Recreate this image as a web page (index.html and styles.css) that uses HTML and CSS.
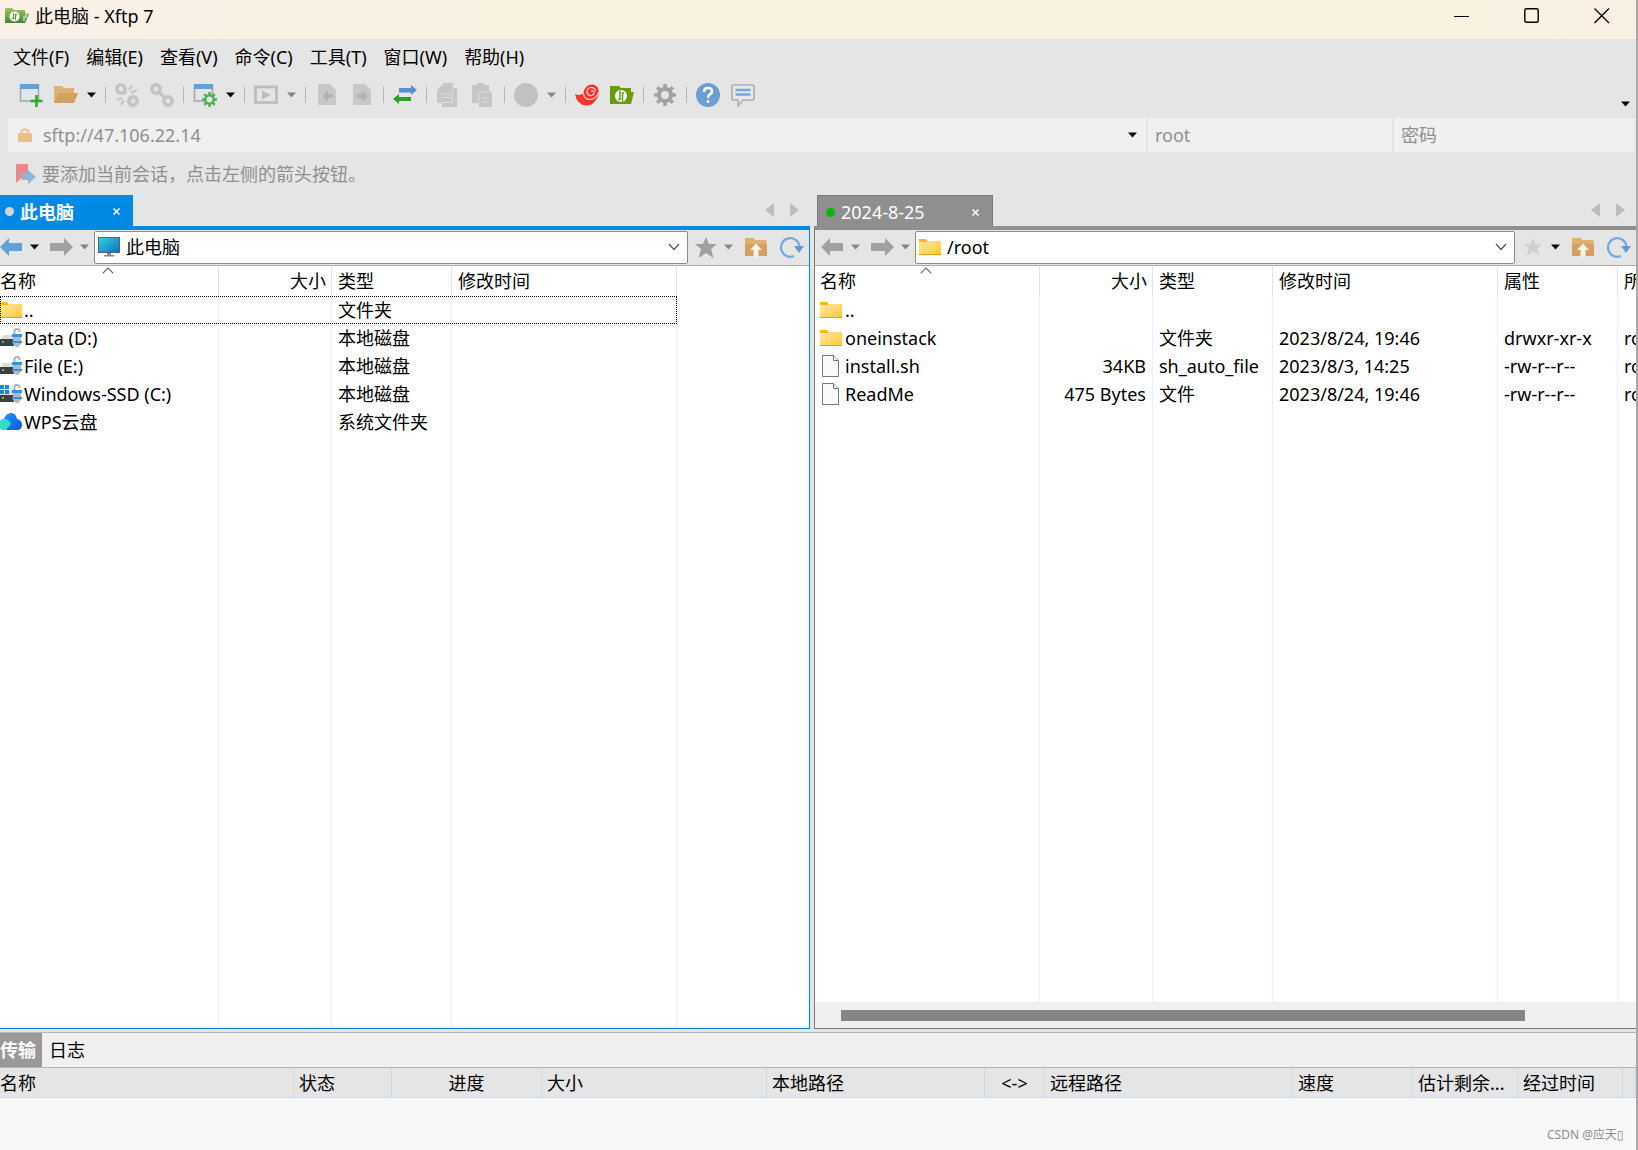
FILE: index.html
```
<!DOCTYPE html>
<html lang="zh-CN">
<head>
<meta charset="utf-8">
<title>此电脑 - Xftp 7</title>
<link rel="stylesheet" href="styles.css">
</head>
<body>
<svg class="defs" aria-hidden="true">
  <defs>
    <linearGradient id="g-folder" x1="0" y1="0" x2="1" y2="1"><stop offset="0" stop-color="#ffe9a2"/><stop offset="1" stop-color="#ffc83d"/></linearGradient>
    <linearGradient id="g-screen" x1="0" y1="0" x2="1" y2="1"><stop offset="0" stop-color="#34d3e0"/><stop offset="1" stop-color="#0f6fc0"/></linearGradient>
    <linearGradient id="g-cloud" x1="0" y1="0" x2="1" y2="1"><stop offset="0" stop-color="#1aa0ff"/><stop offset="1" stop-color="#0b55d8"/></linearGradient>
    <linearGradient id="g-app" x1="0" y1="0" x2="0" y2="1"><stop offset="0" stop-color="#a3c45c"/><stop offset="1" stop-color="#3f8a35"/></linearGradient>
  </defs>
  <symbol id="caret" viewBox="0 0 9 6"><path d="M0 0.5h9L4.5 5.5z" fill="currentColor"/></symbol>
  <symbol id="folder" viewBox="0 0 22 18"><path d="M0 1h7l1.500 2H21.500v13H0z" fill="#fbb917"/><path d="M0 4h8l1-1H22v13H0z" fill="url(#g-folder)"/><path d="M0 16h22v1H0z" fill="#e3a21a"/></symbol>
  <symbol id="file" viewBox="0 0 22 22"><path d="M2.500.5h11l5 5v16h-16z" fill="#f9f9f9" stroke="#777"/><path d="M13.500.5v5h5" fill="#eee" stroke="#777"/></symbol>
  <symbol id="drive" viewBox="0 0 22 20"><path d="M3 7h10v6H0z" fill="#d9dce0"/><path d="M0 11h14v7H0z" fill="#3d3f42"/><path d="M2 13h2v2H2z" fill="#35e23b"/><path d="M14.500 7V3q0-2 2.500-2t2.500 2v1" fill="none" stroke="#a9b2bd" stroke-width="2"/><path d="M13 8h8v8l-3 3h-2l-3-3z" fill="#aeb9c4"/><path d="M12 6h10v3H12zM12 13h10v2H12z" fill="#2d96e0"/></symbol>
  <symbol id="back" viewBox="0 0 23 18"><path d="M0 9L9 0v5h13v8H9v5z" fill="currentColor"/></symbol>
  <symbol id="fwd" viewBox="0 0 23 18"><path d="M23 9L14 0v5H0v8h14v5z" fill="currentColor"/></symbol>
  <symbol id="star" viewBox="0 0 22 21"><path d="M11 0l3 7h8l-6 5 2.500 9L11 16l-7.500 5L6 12 0 7h8z" fill="currentColor"/></symbol>
  <symbol id="up" viewBox="0 0 22 20"><path d="M0 1h9l1 2h11.500v16H0z" fill="#dfb06f"/><path d="M0 7h22v12H0z" fill="#d3a060"/><path d="M11 6.500l6 6.500h-3.500v7h-5v-7H5z" fill="#f6f1ea"/></symbol>
  <symbol id="refresh" viewBox="0 0 24 22"><path d="M14 20a9.300 9.300 0 1 1 5.500-10" fill="none" stroke="#74aadb" stroke-width="2.200"/><path d="M14 10h10l-5 7z" fill="#5e9bd3"/></symbol>
  <symbol id="prev" viewBox="0 0 9 14"><path d="M9 0v14L0 7z" fill="#bdbdbd"/></symbol>
  <symbol id="next" viewBox="0 0 9 14"><path d="M0 0v14l9-7z" fill="#bdbdbd"/></symbol>
  <symbol id="chev" viewBox="0 0 12 8"><path d="M1 1l5 5.500L11 1" fill="none" stroke="#555" stroke-width="1.200"/></symbol>
  <symbol id="sort" viewBox="0 0 12 7"><path d="M.7 6.300L6 1l5.300 5.300" fill="none" stroke="#666" stroke-width="1.200"/></symbol>
  <symbol id="x" viewBox="0 0 7 7"><path d="M.5.5l6 6M6.500.5l-6 6" fill="none" stroke="#fff" stroke-width="1.500"/></symbol>
  <symbol id="gear" viewBox="0 0 24 24"><g stroke="currentColor" stroke-width="3.600"><path d="M12 1v22M1 12h22M4.200 4.200l15.600 15.600M19.800 4.200L4.200 19.800"/></g><circle cx="12" cy="12" r="8" fill="currentColor"/><circle cx="12" cy="12" r="4" fill="#e5e5e5"/></symbol>
</svg>

<div class="window">
  <header class="titlebar">
    <svg class="i24" viewBox="0 0 24 24"><path d="M0 5l1-1h6l2 2h11v3l4 1-3 7-1 2H0z" fill="url(#g-app)"/><circle cx="9.500" cy="12.500" r="5" fill="#fff"/><path d="M8.500 9v5.500H7M10.500 16v-5.500H12" fill="none" stroke="#5c9a3a" stroke-width="1.300"/><path d="M19 12v5M21 10v4" stroke="#fff"/></svg>
    <h1>此电脑 - Xftp 7</h1>
    <div class="winbtns">
      <button aria-label="最小化"><svg width="16" height="16"><path d="M0 8.500h15" stroke="#000"/></svg></button>
      <button aria-label="最大化"><svg width="16" height="16"><rect x=".8" y=".8" width="13.400" height="13.400" rx="1.500" fill="none" stroke="#000" stroke-width="1.400"/></svg></button>
      <button aria-label="关闭"><svg width="16" height="16"><path d="M.5.500l14.500 14.500M15 .5L.5 15" stroke="#000" stroke-width="1.300"/></svg></button>
    </div>
  </header>

  <nav class="menu">
    <button>文件(F)</button><button>编辑(E)</button><button>查看(V)</button><button>命令(C)</button><button>工具(T)</button><button>窗口(W)</button><button>帮助(H)</button>
  </nav>

  <div class="toolbar">
    <button aria-label="新建"><svg class="i24" viewBox="0 0 24 24"><path d="M1.500 2h18v16h-18z" fill="#e2e6ea" stroke="#a2a6aa" stroke-width="1.500"/><path d="M1 1h19v5H1z" fill="#64a0d8"/><path d="M17.500 12v12M11.500 18h12" stroke="#2bab27" stroke-width="2.600"/></svg></button>
    <button aria-label="打开"><svg class="i24" viewBox="0 0 24 24"><path d="M0 3h8l2 2h10v5h4l-4 10H0z" fill="#dfb172"/><path d="M5 10h19l-4 10H0z" fill="#d2a062"/></svg></button>
    <button class="drop" aria-label="打开选项"><svg class="caret"><use href="#caret"/></svg></button>
    <i class="sep"></i>
    <button aria-label="断开"><svg class="i24" viewBox="0 0 24 24" fill="none" stroke="#c4c4c4" stroke-width="3.500"><circle cx="6" cy="6" r="4.200"/><circle cx="18" cy="18" r="4.200"/><path d="M8 8l3 3M14 14l3 3"/><path stroke-width="2" d="M14 7l3-5M16 10l6-3M7 15l-5 2M9 17l-3 5"/></svg></button>
    <button aria-label="重新连接"><svg class="i24" viewBox="0 0 24 24" fill="none" stroke="#c4c4c4" stroke-width="3.500"><circle cx="6" cy="6" r="4.200"/><circle cx="18" cy="18" r="4.200"/><path d="M8 8l8 8"/></svg></button>
    <i class="sep"></i>
    <button aria-label="会话属性"><svg class="i24" viewBox="0 0 24 24"><path d="M1.500 2h18v16h-18z" fill="#e2e6ea" stroke="#a2a6aa" stroke-width="1.500"/><path d="M1 1h19v5H1z" fill="#64a0d8"/><g stroke="#4cb04a" stroke-width="2.400" fill="none"><circle cx="16.500" cy="16.500" r="4.200" fill="#e5e5e5"/><path d="M16.500 9v3M16.500 21v3M9 16.500h3M21 16.500h3M11.200 11.200l2 2M19.800 19.800l2 2M11.200 21.800l2-2M19.800 13.200l2-2"/></g></svg></button>
    <button class="drop" aria-label="属性选项"><svg class="caret"><use href="#caret"/></svg></button>
    <i class="sep"></i>
    <button aria-label="执行"><svg class="i24" viewBox="0 0 24 24"><rect x="1.500" y="4" width="21" height="15.500" fill="none" stroke="#bdbdbd" stroke-width="2.800"/><path d="M8 7.500l9 4.500-9 4.500z" fill="#bdbdbd"/></svg></button>
    <button class="drop dim" aria-label="执行选项"><svg class="caret"><use href="#caret"/></svg></button>
    <i class="sep"></i>
    <button aria-label="接收"><svg class="i24" viewBox="0 0 24 24"><path d="M3 1h12l6 6v15H3z" fill="#c8c8c8"/><path d="M7 13l6-6v4h5v4h-5v4z" fill="#b4b4b4"/></svg></button>
    <button aria-label="发送"><svg class="i24" viewBox="0 0 24 24"><path d="M3 1h12l6 6v15H3z" fill="#c8c8c8"/><path d="M18 13l-6-6v4H7v4h5v4z" fill="#b4b4b4"/></svg></button>
    <i class="sep"></i>
    <button aria-label="同步"><svg class="i24" viewBox="0 0 24 24"><path d="M6 5h12V2l6 5-6 5V9.500H6z" fill="#5590d4"/><path d="M18 14H6v-3l-6 5 6 5v-3h12z" fill="#28a324"/></svg></button>
    <i class="sep"></i>
    <button aria-label="复制"><svg class="i24" viewBox="0 0 24 24"><path d="M8 0h9v5h4v19H6v-4H1V7z" fill="#c6c6c6"/><path d="M5 11h10M5 14.500h10M16.500 5v14.500H6" stroke="#dcdcdc" fill="none"/></svg></button>
    <button aria-label="粘贴"><svg class="i24" viewBox="0 0 24 24"><path d="M1 2h5V0h7v2h5v5l3 3v14H8v-4H1z" fill="#c6c6c6"/><path d="M8 20V9h9M11 15h7M11 18.500h7" stroke="#dcdcdc" fill="none"/></svg></button>
    <i class="sep"></i>
    <button aria-label="停止"><svg class="i24" viewBox="0 0 24 24"><circle cx="12" cy="12" r="12" fill="#c1c1c1"/></svg></button>
    <button class="drop dim" aria-label="停止选项"><svg class="caret"><use href="#caret"/></svg></button>
    <i class="sep"></i>
    <button aria-label="Xshell"><svg class="i24" viewBox="0 0 24 24"><path d="M0 11q4 2 8.500-.5Q9 4 14 2q6-2 9 3l1 4q-.5 5-3 8-4 6-10 5.500Q2 22 0 11z" fill="#f0362f"/><path d="M8.500 10.500q.5 6 6.500 6 7-.5 9-8M20.500 8q-1-4-5-3.500-4 1-3.500 5 1 3.500 4.500 3 3-1 2.500-3.500-1-2-3-1" fill="none" stroke="#f6cfcc" stroke-width="1.200"/></svg></button>
    <button aria-label="Xftp"><svg class="i24" viewBox="0 0 24 24"><path d="M0 3h9l2 2h10v4h3l-3 12H0z" fill="#679c0e"/><circle cx="11" cy="13" r="6" fill="#fff"/><path d="M10 8v8.500H8M12.500 18.500V10H14" stroke="#679c0e" stroke-width="1.500" fill="none"/></svg></button>
    <i class="sep"></i>
    <button class="gear" aria-label="选项"><svg class="i24"><use href="#gear"/></svg></button>
    <i class="sep"></i>
    <button aria-label="帮助"><svg class="i24" viewBox="0 0 24 24"><circle cx="12" cy="12" r="12" fill="#6b9ed4"/><path d="M8 9q0-4 4-4t4 3.500q0 2-2.500 3.200Q12 12.500 12 15" fill="none" stroke="#fff" stroke-width="2.500"/><circle cx="12" cy="18.500" r="1.600" fill="#fff"/></svg></button>
    <button aria-label="反馈"><svg class="i24" viewBox="0 0 24 24"><path d="M3 2h18q2 0 2 2v11q0 2-2 2h-9l-5 6v-6H3q-2 0-2-2V4q0-2 2-2z" fill="#e9e9e9" stroke="#b0b0b0" stroke-width="1.700"/><path d="M4.500 7h15M4.500 11.500h15" stroke="#72a8df" stroke-width="2.600"/></svg></button>
    <button class="more" aria-label="更多"><svg class="caret"><use href="#caret"/></svg></button>
  </div>

  <form class="address">
    <label class="host"><svg width="14" height="14" viewBox="0 0 14 14"><path d="M3.500 6V3.500q0-2 3.500-2t3.500 2V6" fill="none" stroke="#e8c08a" stroke-width="2"/><rect y="5" width="14" height="9" rx="1" fill="#e8c08a"/></svg><input aria-label="主机" value="sftp://47.106.22.14"><svg class="caret"><use href="#caret"/></svg></label>
    <input class="user" aria-label="用户名" value="root">
    <input class="pass" aria-label="密码" placeholder="密码">
  </form>

  <div class="hint">
    <svg width="20" height="20" viewBox="0 0 20 20"><path d="M0 0h12v9l-5 4-7 6z" fill="#e38c90"/><path d="M6 9h6V6l8 7-8 7v-4H6z" fill="#92b4d8"/></svg>
    <span>要添加当前会话，点击左侧的箭头按钮。</span>
  </div>

  <main class="panes">
    <section class="pane local">
      <div class="tabs">
        <div class="tab"><i class="dot"></i><span>此电脑</span><button aria-label="关闭标签"><svg width="7" height="7"><use href="#x"/></svg></button></div>
        <div class="tabnav"><button aria-label="上一个"><svg><use href="#prev"/></svg></button><button aria-label="下一个"><svg><use href="#next"/></svg></button></div>
      </div>
      <div class="body">
        <div class="nav">
          <button class="arrow blue" aria-label="后退"><svg><use href="#back"/></svg></button>
          <button class="drop" aria-label="后退历史"><svg class="caret"><use href="#caret"/></svg></button>
          <button class="arrow" aria-label="前进"><svg><use href="#fwd"/></svg></button>
          <button class="drop dim" aria-label="前进历史"><svg class="caret"><use href="#caret"/></svg></button>
          <label class="path"><svg width="22" height="20" viewBox="0 0 22 20"><rect x=".5" y=".5" width="21" height="15" fill="url(#g-screen)" stroke="#47667d"/><path d="M9 16h4v2h3v1.500H6V18h3z" fill="#7b8a96"/></svg><input aria-label="本地路径" value="此电脑"><svg class="chev"><use href="#chev"/></svg></label>
          <div class="tools">
            <button class="star" aria-label="收藏"><svg width="22" height="21"><use href="#star"/></svg></button>
            <button class="drop dim" aria-label="收藏列表"><svg class="caret"><use href="#caret"/></svg></button>
            <button class="upbtn" aria-label="上级目录"><svg width="22" height="20"><use href="#up"/></svg></button>
            <button class="re" aria-label="刷新"><svg width="24" height="22"><use href="#refresh"/></svg></button>
          </div>
        </div>
        <div class="list">
          <table class="files">
            <colgroup><col class="c-name"><col class="c-size"><col class="c-type"><col class="c-time"></colgroup>
            <thead><tr><th>名称<svg class="sort"><use href="#sort"/></svg></th><th class="r">大小</th><th>类型</th><th>修改时间</th></tr></thead>
            <tbody>
              <tr class="focus"><td><span class="n"><svg class="fi"><use href="#folder"/></svg>..</span></td><td></td><td>文件夹</td><td></td></tr>
              <tr><td><span class="n"><svg class="fi"><use href="#drive"/></svg>Data (D:)</span></td><td></td><td>本地磁盘</td><td></td></tr>
              <tr><td><span class="n"><svg class="fi"><use href="#drive"/></svg>File (E:)</span></td><td></td><td>本地磁盘</td><td></td></tr>
              <tr><td><span class="n"><svg class="fi" viewBox="0 0 22 20"><use href="#drive" width="22" height="20"/><path d="M0 0h9v10H0z" fill="#fff"/><path d="M0 1h4v4H0zM5 1h4v4H5zM0 6h4v4H0zM5 6h4v4H5z" fill="#0f88d8"/></svg>Windows-SSD (C:)</span></td><td></td><td>本地磁盘</td><td></td></tr>
              <tr><td><span class="n"><svg class="fi" viewBox="0 0 22 20"><path d="M5 18q-6 0-6-5t5-6Q6 1 11 1q5 0 6 6 5 1 5 6t-5 5z" fill="url(#g-cloud)"/><path d="M-1 13q0-6 6-6 4 0 6 5l-5 6H5q-6 0-6-5z" fill="#2fdcd0"/></svg>WPS云盘</span></td><td></td><td>系统文件夹</td><td></td></tr>
              <tr class="fill"><td></td><td></td><td></td><td></td></tr>
            </tbody>
          </table>
        </div>
      </div>
    </section>

    <section class="pane remote">
      <div class="tabs">
        <div class="tab"><i class="dot"></i><span>2024-8-25</span><button aria-label="关闭标签"><svg width="7" height="7"><use href="#x"/></svg></button></div>
        <div class="tabnav"><button aria-label="上一个"><svg><use href="#prev"/></svg></button><button aria-label="下一个"><svg><use href="#next"/></svg></button></div>
      </div>
      <div class="body">
        <div class="nav">
          <button class="arrow" aria-label="后退"><svg><use href="#back"/></svg></button>
          <button class="drop dim" aria-label="后退历史"><svg class="caret"><use href="#caret"/></svg></button>
          <button class="arrow" aria-label="前进"><svg><use href="#fwd"/></svg></button>
          <button class="drop dim" aria-label="前进历史"><svg class="caret"><use href="#caret"/></svg></button>
          <label class="path"><svg width="22" height="18"><use href="#folder"/></svg><input aria-label="远程路径" value="/root"><svg class="chev"><use href="#chev"/></svg></label>
          <div class="tools">
            <button class="star pale" aria-label="收藏"><svg width="18" height="18"><use href="#star"/></svg></button>
            <button class="drop" aria-label="收藏列表"><svg class="caret"><use href="#caret"/></svg></button>
            <button class="upbtn" aria-label="上级目录"><svg width="22" height="20"><use href="#up"/></svg></button>
            <button class="re" aria-label="刷新"><svg width="24" height="22"><use href="#refresh"/></svg></button>
          </div>
        </div>
        <div class="list">
          <table class="files">
            <colgroup><col class="c-name"><col class="c-size"><col class="c-type"><col class="c-time"><col class="c-attr"><col class="c-own"></colgroup>
            <thead><tr><th>名称<svg class="sort"><use href="#sort"/></svg></th><th class="r">大小</th><th>类型</th><th>修改时间</th><th>属性</th><th>所有者</th></tr></thead>
            <tbody>
              <tr><td><span class="n"><svg class="fi"><use href="#folder"/></svg>..</span></td><td></td><td></td><td></td><td></td><td></td></tr>
              <tr><td><span class="n"><svg class="fi"><use href="#folder"/></svg>oneinstack</span></td><td></td><td>文件夹</td><td>2023/8/24, 19:46</td><td>drwxr-xr-x</td><td>root</td></tr>
              <tr><td><span class="n"><svg class="fi"><use href="#file"/></svg>install.sh</span></td><td class="r">34KB</td><td>sh_auto_file</td><td>2023/8/3, 14:25</td><td>-rw-r--r--</td><td>root</td></tr>
              <tr><td><span class="n"><svg class="fi"><use href="#file"/></svg>ReadMe</span></td><td class="r">475 Bytes</td><td>文件</td><td>2023/8/24, 19:46</td><td>-rw-r--r--</td><td>root</td></tr>
              <tr class="fill"><td></td><td></td><td></td><td></td><td></td><td></td></tr>
            </tbody>
          </table>
        </div>
        <div class="scroll"><div class="thumb"></div></div>
      </div>
    </section>
  </main>

  <section class="transfer">
    <div class="ttabs"><button class="on">传输</button><button>日志</button></div>
    <table class="queue">
      <colgroup><col class="q1"><col class="q2"><col class="q3"><col class="q4"><col class="q5"><col class="q6"><col class="q7"><col class="q8"><col class="q9"><col class="q10"><col></colgroup>
      <thead><tr><th>名称</th><th>状态</th><th class="c">进度</th><th>大小</th><th>本地路径</th><th class="c">&lt;-&gt;</th><th>远程路径</th><th>速度</th><th>估计剩余...</th><th>经过时间</th><th></th></tr></thead>
    </table>
    <p class="mark">CSDN @应天▯</p>
  </section>
</div>
</body>
</html>
```
FILE: styles.css
```
* { box-sizing: border-box; }
body {
  margin: 0;
  background: #a9a9a9;
  color: #000;
  font: 18px/26px "Noto Sans", "Noto Sans CJK SC", sans-serif;
}
button, input {
  font: inherit;
  color: inherit;
  background: none;
  border: 0;
  padding: 0;
  margin: 0;
}
button { display: flex; align-items: center; flex: none; }
input { min-width: 0; width: 100%; outline: 0; }
svg { display: block; flex: none; }
.defs { position: absolute; width: 0; height: 0; }
.i24 { width: 24px; height: 24px; }
.caret { width: 9px; height: 6px; }
.dim { color: #858585; }

.window {
  display: flex;
  flex-direction: column;
  height: 100vh;
  margin-right: 2px;
  background: #e5e5e5;
  overflow: hidden;
}

.titlebar {
  display: flex;
  align-items: center;
  gap: 6px;
  height: 39px;
  padding: 0 26px 7px 5px;
  background: linear-gradient(90deg, #faf0e8, #f9f2e1 30%, #f9f2e1 90%, #f9f0e4);
}
.titlebar h1 { flex: 1; margin: 0; font-size: 18px; font-weight: 400; }
.winbtns { display: flex; gap: 54px; }

.menu { display: flex; gap: 17px; height: 38px; padding: 0 13px 2px; align-items: center; }

.toolbar { display: flex; align-items: center; height: 37px; padding: 0 6px 2px 19px; }
.toolbar > button + button { margin-left: 11px; }
.toolbar > button.drop { margin-left: 9px; }
.toolbar > button.more { margin: 18px 0 0 auto; }
.sep { width: 1px; height: 16px; margin: 0 9px; background: #b5b5b5; }
.gear { color: #a2a2a2; }

.address {
  display: grid;
  grid-template-columns: minmax(0, 1138fr) minmax(0, 244fr) minmax(0, 241fr);
  gap: 2px;
  height: 38px;
  padding: 4px 1px 0 8px;
  color: #8f8f8f;
}
.address > * { background: #f0f0f0; height: 34px; }
.host { display: flex; align-items: center; gap: 11px; padding: 0 9px 0 10px; }
.host .caret { color: #000; }
.user, .pass { padding: 0 7px; }
.pass::placeholder { color: #8f8f8f; opacity: 1; }

.hint { display: flex; align-items: center; gap: 6px; height: 43px; padding: 1px 16px 0; color: #8f8f8f; }

.panes {
  flex: 1;
  min-height: 0;
  display: grid;
  grid-template-columns: minmax(0, 810fr) minmax(0, 822fr);
  gap: 4px;
}
.pane { display: flex; flex-direction: column; min-width: 0; min-height: 0; }
.local { --accent: #008ae5; --edge: #0a84d0; }
.remote { --accent: #8f8f8f; --edge: #7b7b7b; }
.tabs { display: flex; justify-content: space-between; align-items: flex-end; height: 31px; }
.tab { display: flex; align-items: center; height: 31px; background: var(--accent); color: #fff; padding: 2px 13px 0 5px; gap: 6px; }
.tab span { flex: 1; }
.tab .dot { width: 9px; height: 9px; border-radius: 50%; background: #d5d5d5; }
.local .tab { width: 133px; font-weight: 700; }
.remote .tab { width: 176px; margin-left: 3px; padding-left: 8px; border: 1px solid #7b7b7b; border-bottom: 0; }
.remote .dot { background: #0cb50c; }
.tabnav { display: flex; gap: 16px; padding: 0 11px 9px 0; }
.tabnav svg { width: 9px; height: 14px; }

.body {
  flex: 1;
  min-height: 0;
  display: flex;
  flex-direction: column;
  border-top: 4px solid var(--accent);
  border-bottom: 1px solid var(--edge);
  background: #fff;
}
.local .body { border-right: 1px solid var(--edge); }
.remote .body { border-left: 1px solid var(--edge); }
.nav { display: flex; align-items: center; height: 36px; padding-bottom: 1px; background: #e5e5e5; border-bottom: 1px solid #b0b0b0; }
.remote .nav { padding-left: 6px; }
.arrow { color: #a0a0a0; }
.blue { color: #62a0d8; }
.arrow svg { width: 23px; height: 18px; }
.arrow + .drop { margin-left: 7px; }
.drop + .arrow { margin-left: 11px; }
.path {
  flex: 1;
  display: flex;
  align-items: center;
  gap: 6px;
  height: 33px;
  margin-left: 5px;
  padding: 0 7px 1px 3px;
  background: #fff;
  border: 1px solid #8c8c8c;
  border-radius: 2px;
}
.chev { width: 12px; height: 8px; }
.tools { display: flex; align-items: center; padding: 0 5px 0 7px; }
.star { width: 22px; color: #9f9f9f; }
.pale { color: #cfcfcf; justify-content: center; }
.star + .drop { margin-left: 7px; }
.upbtn { margin: 0 13px 0 12px; }

.list { flex: 1; min-height: 0; overflow: hidden; }
.files { table-layout: fixed; border-collapse: separate; border-spacing: 0; height: 100%; width: 677px; }
.remote .files { width: 903px; }
.c-name { width: 219px; }
.remote .c-name { width: 225px; }
.c-size { width: 113px; }
.c-type, .c-attr { width: 120px; }
.c-time { width: 225px; }
.c-own { width: 100px; }
th, td { padding: 0 6px; border-right: 1px solid #e9f1fa; font-weight: 400; text-align: left; white-space: nowrap; overflow: hidden; }
.files th { position: relative; height: 30px; line-height: 28px; padding-top: 0; border-color: #e3e3e3; }
.files td { height: 28px; line-height: 27px; }
.files .fill td { height: auto; }
.files th:first-child, .files td:first-child { padding-left: 0; }
.remote .files th:first-child, .remote .files td:first-child { padding-left: 5px; }
.files .r { text-align: right; }
.files th.r { padding-right: 5px; }
.n { display: flex; align-items: center; gap: 2px; }
.remote .n { gap: 3px; }
.fi { width: 22px; height: 20px; }
.remote .fi { height: 22px; }
.sort { position: absolute; top: 1px; left: calc(50% - 7px); width: 12px; height: 7px; }
.focus { outline: 1px dotted #000; outline-offset: -1px; }

.scroll { height: 26px; padding: 8px 111px 7px 26px; background: #f0f0f0; }
.thumb { height: 11px; background: #858585; }

.transfer { height: 121px; flex: none; display: flex; flex-direction: column; padding-top: 3px; }
.ttabs { display: flex; height: 36px; background: #f0f0f0; border-top: 1px solid #b5b5b5; border-bottom: 1px solid #b5b5b5; }
.ttabs button { padding: 0 7px; }
.ttabs .on { width: 42px; padding: 0; background: #999; color: #fff; font-weight: 700; }
.queue { table-layout: fixed; width: 100%; border-collapse: separate; border-spacing: 0; }
.queue th { height: 30px; line-height: 28px; padding: 0 5px; background: #e5e5e5; border-right: 1px solid #d0dae6; border-bottom: 1px solid #d0dae6; }
.queue th:first-child { padding-left: 0; }
.queue .c { text-align: center; }
.q1 { width: 294px; }
.q2 { width: 98px; }
.q3 { width: 150px; }
.q4 { width: 225px; }
.q5 { width: 218px; }
.q6 { width: 60px; }
.q7 { width: 248px; }
.q8 { width: 120px; }
.q9, .q10 { width: 105px; }
.mark { flex: 1; margin: 0; padding: 24px 12px 0 0; background: #f8f8f8; color: #8c8c8c; font-size: 12px; text-align: right; }
```
